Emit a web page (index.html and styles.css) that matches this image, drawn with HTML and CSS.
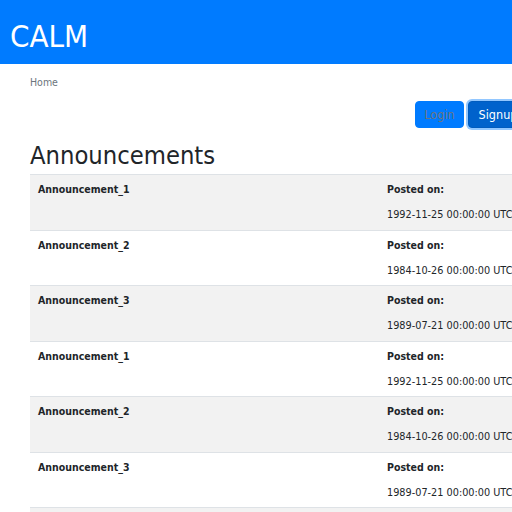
FILE: index.html
```html
<!DOCTYPE html>
<html>
<head>
<meta charset="utf-8">
<link rel="stylesheet" href="styles.css">
</head>
<body>
<header class="topbar"><span class="brand">CALM</span></header>
<nav class="crumbs">Home</nav>
<div class="actions">
  <button class="btn btn-login">Login</button>
  <button class="btn btn-signup">Signup</button>
</div>
<h1 class="title">Announcements</h1>
<div class="list">
  <div class="row odd"><div class="c1"><b>Announcement_1</b></div><div class="c2"><b>Posted on:</b><div class="date">1992-11-25 00:00:00 UTC</div></div></div>
  <div class="row"><div class="c1"><b>Announcement_2</b></div><div class="c2"><b>Posted on:</b><div class="date">1984-10-26 00:00:00 UTC</div></div></div>
  <div class="row odd"><div class="c1"><b>Announcement_3</b></div><div class="c2"><b>Posted on:</b><div class="date">1989-07-21 00:00:00 UTC</div></div></div>
  <div class="row"><div class="c1"><b>Announcement_1</b></div><div class="c2"><b>Posted on:</b><div class="date">1992-11-25 00:00:00 UTC</div></div></div>
  <div class="row odd"><div class="c1"><b>Announcement_2</b></div><div class="c2"><b>Posted on:</b><div class="date">1984-10-26 00:00:00 UTC</div></div></div>
  <div class="row"><div class="c1"><b>Announcement_3</b></div><div class="c2"><b>Posted on:</b><div class="date">1989-07-21 00:00:00 UTC</div></div></div>
  <div class="row odd"><div class="c1"><b>Announcement_1</b></div><div class="c2"><b>Posted on:</b><div class="date">1992-11-25 00:00:00 UTC</div></div></div>
</div>
</body>
</html>
```
FILE: styles.css
```css
html, body { margin: 0; padding: 0; overflow: hidden; }
body {
  font-family: "DejaVu Sans Condensed", "DejaVu Sans", sans-serif;
  color: #212529;
  width: 512px;
}
.topbar {
  background: #007bff;
  height: 64px;
  box-sizing: border-box;
  padding: 8px 0 0 10px;
  display: flex;
  align-items: center;
}
.brand { color: #fff; font-size: 31px; line-height: 1; }
.crumbs {
  padding: 12px 0 0 30px;
  font-size: 10.5px;
  line-height: 13px;
  color: #6c757d;
}
.actions {
  display: flex;
  gap: 4px;
  padding: 12px 0 0 415px;
  width: 600px;
}
.btn {
  font-family: inherit;
  font-size: 12.5px;
  height: 27px;
  border-radius: 4px;
  border: 1px solid #007bff;
  padding: 0 8px;
  flex: none;
}
.btn-login { background: #007bff; color: #6c757d; width: 49px; }
.btn-signup {
  background: #0062cc;
  border-color: #005cbf;
  color: #fff;
  box-shadow: 0 0 0 2px rgba(38,143,255,.5);
  width: 60px;
}
.title {
  margin: 13px 0 3px 30px;
  font-weight: normal;
  font-size: 25.3px;
  line-height: 30px;
}
.list { margin-left: 30px; width: 600px; }
.row {
  display: flex;
  box-sizing: border-box;
  height: 55.5px;
  border-top: 1px solid #dee2e6;
  font-size: 10.5px;
}
.row.odd { background: #f2f2f2; }
.c1 { width: 357px; box-sizing: border-box; padding: 8px; }
.c2 { padding: 8px 0; }
.c1 b, .c2 b { display: block; line-height: 13px; }
.date { margin-top: 12px; line-height: 13px; font-size: 10.8px; color: #212529; }
```
